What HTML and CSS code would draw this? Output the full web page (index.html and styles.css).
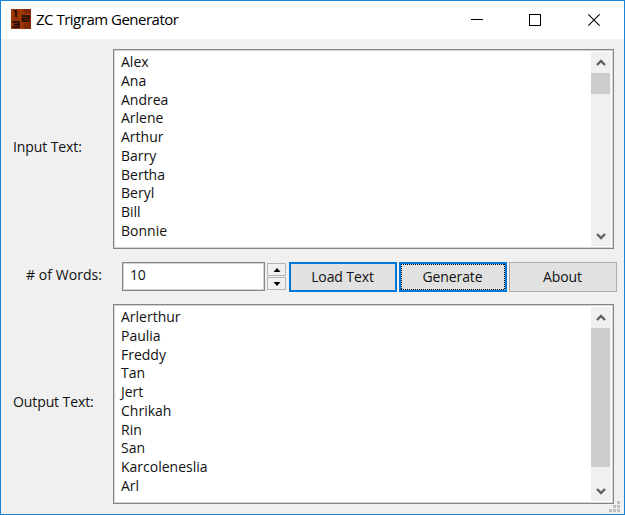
FILE: index.html
```html
<!DOCTYPE html>
<html lang="en">
<head>
<meta charset="utf-8">
<title>ZC Trigram Generator</title>
<link rel="stylesheet" href="styles.css">
</head>
<body>
<div class="window">
  <header class="titlebar">
    <svg class="app-icon" width="20" height="20" viewBox="0 0 20 20">
      <rect width="20" height="20" fill="#963205"/>
      <path d="M0 0h2v20H0zM8 0h3v20H8z" fill="#ae4208" opacity=".5"/>
      <path d="M13 14h7v6h-7zM13 0h7v4h-7z" fill="#6b1c02" opacity=".5"/>
      <path d="M3 2h2v6M10.500 7h7.500v2.500h-6.500V12H19M1 13h7v5H1M3 15.500h5" fill="none" stroke="#160a08" stroke-width="1.500"/>
    </svg>
    <h1 class="title">ZC Trigram Generator</h1>
    <svg class="controls" width="138" height="30" viewBox="0 0 138 30" fill="none" stroke="#000">
      <path d="M9 14.5h12M67.5 9.5h11v11h-11z" shape-rendering="crispEdges"/>
      <path d="M126.300 9.300l11.400 11.400M137.700 9.300l-11.400 11.400" stroke-width="1.100"/>
    </svg>
  </header>
  <main class="content">
    <section class="text-row">
      <label class="label input-label">Input Text:</label>
      <div class="textbox">
        <div class="lines"><p>Alex</p><p>Ana</p><p>Andrea</p><p>Arlene</p><p>Arthur</p><p>Barry</p><p>Bertha</p><p>Beryl</p><p>Bill</p><p>Bonnie</p></div>
        <div class="scrollbar">
          <svg class="arrow" width="20" height="21" viewBox="0 0 20 21"><path d="M6 13l4-4 4 4" /></svg>
          <div class="thumb short"></div>
          <svg class="arrow last" width="20" height="21" viewBox="0 0 20 21"><path d="M6 9l4 4 4-4" /></svg>
        </div>
      </div>
    </section>
    <section class="toolbar">
      <label class="label words-label"># of Words:</label>
      <div class="entry">10</div>
      <div class="spinner">
        <div class="spin"><svg width="8" height="4" viewBox="0 0 8 4"><path d="M0.500 4L4 0l3.500 4z"/></svg></div>
        <div class="spin"><svg width="8" height="4" viewBox="0 0 8 4"><path d="M0.500 0L4 4l3.500-4z"/></svg></div>
      </div>
      <div class="button active load">Load Text</div>
      <div class="button active generate"><svg class="focus" width="104" height="26" viewBox="0 0 104 26"><path d="M0 .5h104M0 25.500h104M.5 0v26M103.500 0v26"/></svg><span>Generate</span></div>
      <div class="button about">About</div>
    </section>
    <section class="text-row">
      <label class="label output-label">Output Text:</label>
      <div class="textbox">
        <div class="lines"><p>Arlerthur</p><p>Paulia</p><p>Freddy</p><p>Tan</p><p>Jert</p><p>Chrikah</p><p>Rin</p><p>San</p><p>Karcoleneslia</p><p>Arl</p></div>
        <div class="scrollbar">
          <svg class="arrow" width="20" height="21" viewBox="0 0 20 21"><path d="M6 13l4-4 4 4" /></svg>
          <div class="thumb long"></div>
          <svg class="arrow last" width="20" height="21" viewBox="0 0 20 21"><path d="M6 9l4 4 4-4" /></svg>
        </div>
      </div>
    </section>
  </main>
  <svg class="grip" width="11" height="11" viewBox="0 0 11 11"><path d="M8 0h3v3H8zM4 4h3v3H4zM8 4h3v3H8zM0 8h3v3H0zM4 8h3v3H4zM8 8h3v3H8z"/></svg>
</div>
</body>
</html>
```

FILE: styles.css
```css
* { box-sizing: border-box; }
body {
  margin: 0;
  font-family: "Open Sans", "Noto Sans", sans-serif;
  font-size: 14px;
  color: #111;
  overflow: hidden;
}
p, h1 { margin: 0; }
svg { display: block; flex: none; }
.window {
  position: relative;
  width: 625px;
  height: 515px;
  border: 1px solid #1883d7;
  background: #f0f0f0;
}
.titlebar {
  display: flex;
  height: 38px;
  padding: 8px 24px 0 10px;
  background: #fff;
}
.title {
  margin-left: 5px;
  font-size: 15px;
  font-weight: 400;
  line-height: 20px;
  letter-spacing: -0.5px;
  color: #000;
  white-space: nowrap;
}
.controls { margin: -4px 0 0 auto; }
.content { padding: 10px 7px 0 12px; }
.text-row { display: flex; align-items: center; }
.label {
  flex: none;
  width: 100px;
  padding-bottom: 5px;
  line-height: 20px;
  letter-spacing: -0.1px;
  white-space: nowrap;
}
.textbox {
  display: flex;
  width: 501px;
  height: 200px;
  border: 1px solid #858585;
  box-shadow: inset 0 0 0 1px #d4d4d4;
  background: #fff;
}
.lines { flex: 1; padding: 3px 7px; letter-spacing: 0; }
.lines p { height: 18.75px; line-height: 18px; }
.scrollbar {
  display: flex;
  flex-direction: column;
  width: 20px;
  margin: 2px 2px 2px 0;
  background: #f0f0f0;
}
.arrow path { fill: none; stroke: #606060; stroke-width: 2.4; }
.arrow.last { margin-top: auto; }
.thumb { width: 19px; background: #cdcdcd; }
.short { height: 21px; }
.long { height: 139px; }
.toolbar {
  display: flex;
  align-items: center;
  height: 29px;
  margin: 13px 0;
}
.words-label { width: 109px; padding: 0 0 3px 13px; letter-spacing: 0.05px; }
.entry {
  flex: none;
  width: 143px;
  height: 29px;
  padding-left: 7px;
  border: 1px solid #858585;
  box-shadow: inset 0 0 0 1px #d4d4d4;
  background: #fff;
  line-height: 24px;
  letter-spacing: -0.3px;
}
.spinner {
  display: grid;
  gap: 1px;
  margin: 0 3px 0 2px;
}
.spin {
  display: grid;
  place-content: center;
  width: 19px;
  height: 13px;
  border: 1px solid #b4b4b4;
  background: #f0f0f0;
}
.button {
  position: relative;
  flex: none;
  width: 108px;
  height: 30px;
  margin-right: 2px;
  padding-right: 1px;
  border: 1px solid #adadad;
  background: #e1e1e1;
  line-height: 27px;
  text-align: center;
  letter-spacing: -0.1px;
}
.active { border: 2px solid #0078d7; line-height: 25px; }
.focus { position: absolute; inset: 0; }
.focus path { fill: none; stroke: #000; stroke-dasharray: 1 1; }
.grip { position: absolute; right: 4px; bottom: 2px; fill: #bfbfbf; }
```
